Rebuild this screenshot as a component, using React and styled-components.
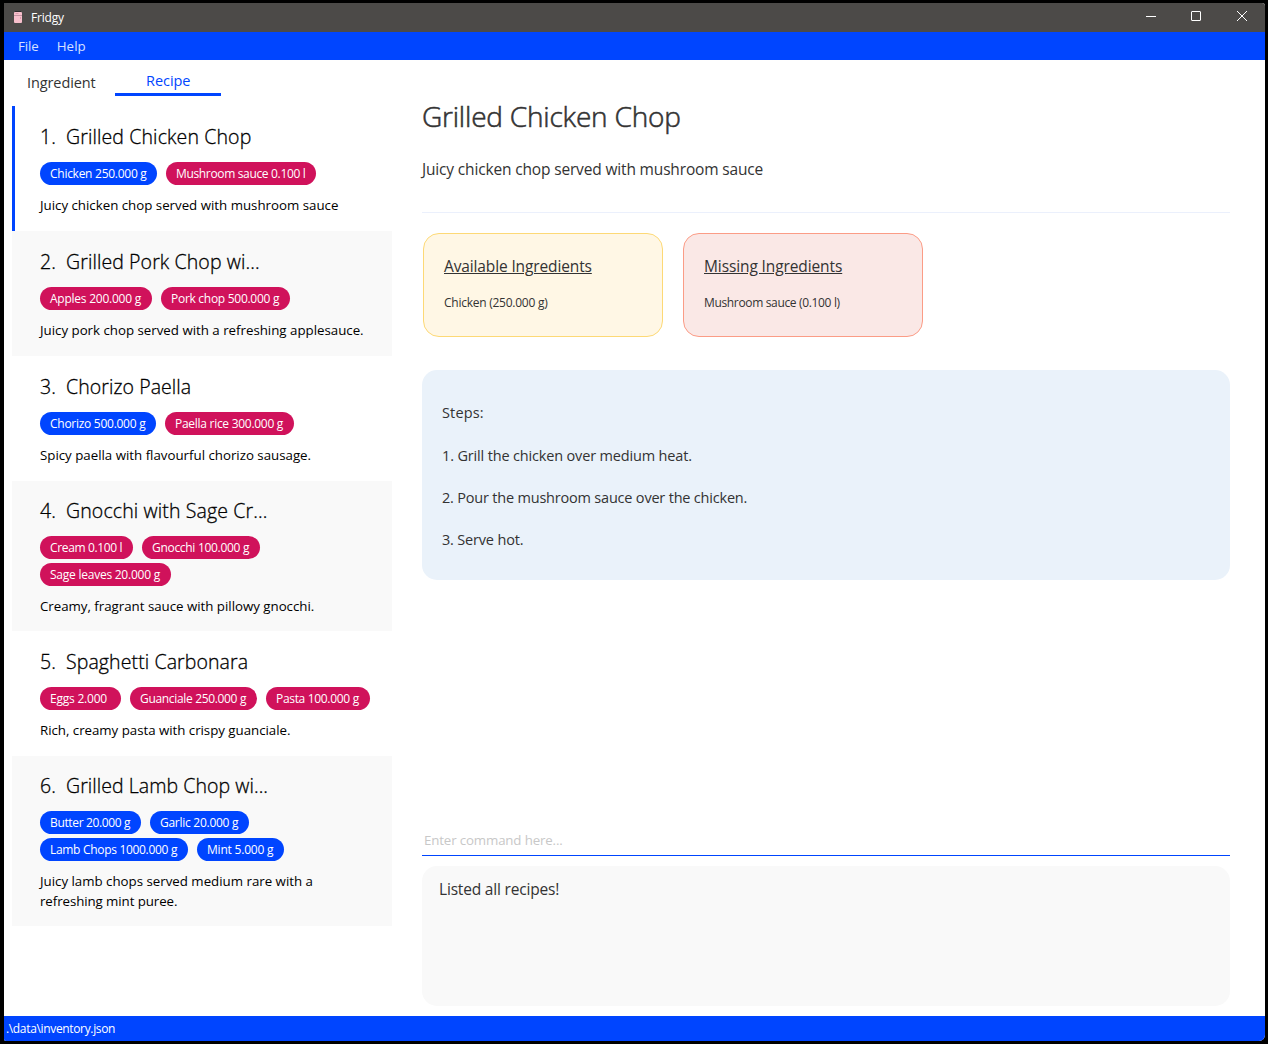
import React from "react";
import styled, { createGlobalStyle } from "styled-components";

const BLUE = "#0045ff";
const PINK = "#d0125b";

const Global = createGlobalStyle`
  * { box-sizing: border-box; }
  body { margin: 0; background: #000; font-family: "Open Sans", "Noto Sans", sans-serif; color: #333; }
`;

const Desktop = styled.div`
  height: 1044px;
  padding: 3px 3px 3px 4px;
  background: #000;
`;
const Window = styled.div`
  display: flex;
  flex-direction: column;
  height: 1038px;
  background: #fff;
  border-radius: 0 3px 6px 2px;
  overflow: hidden;
`;
const TitleBar = styled.header`
  display: flex;
  align-items: center;
  height: 29px;
  flex: none;
  padding-left: 9px;
  background: #4c4a48;
  color: #fff;
`;
const AppIcon = styled.svg`
  width: 10px;
  height: 13px;
  margin-right: 8px;
`;
const WindowControls = styled.div`
  display: flex;
  margin-left: auto;
`;
const ControlIcon = styled.svg`
  width: 46px;
  height: 29px;
`;
const MenuBar = styled.nav`
  display: flex;
  align-items: center;
  gap: 18px;
  height: 28px;
  flex: none;
  padding-left: 14px;
  background: ${BLUE};
  color: #d6e0ff;
`;
const Body = styled.main`
  display: flex;
  flex: 1;
  min-height: 0;
`;
const Sidebar = styled.aside`
  width: 388px;
  padding-left: 8px;
`;
const Tabs = styled.div`
  display: flex;
  height: 46px;
`;
const Tab = styled.div`
  height: ${(p) => (p.$active ? 36 : 46)}px;
  width: ${(p) => (p.$active ? 106 : 103)}px;
  padding: ${(p) => (p.$active ? "11px 0 0 31px" : "13px 0 0 15px")};
  color: ${(p) => (p.$active ? BLUE : "#333")};
  border-bottom: ${(p) => (p.$active ? `3px solid ${BLUE}` : "none")};
`;
const Card = styled.article`
  height: ${(p) => p.$height}px;
  width: 380px;
  padding: ${(p) => p.$top}px 0 0 ${(p) => (p.$selected ? 25 : 28)}px;
  background: ${(p) => (p.$shaded ? "#f9f9f9" : "#fff")};
  border-left: ${(p) => (p.$selected ? `3px solid ${BLUE}` : "none")};
  color: #000;
`;
const CardTitle = styled.div`
  display: flex;
  height: 29px;
`;
const CardNumber = styled.div`
  width: 26px;
`;
const TagFlow = styled.div`
  display: flex;
  flex-wrap: wrap;
  gap: 4px 9px;
  width: 340px;
  margin: 10px 0;
`;
const Tag = styled.div`
  height: 23px;
  width: ${(p) => p.$width}px;
  padding: 4px 0 0 10px;
  border-radius: 12px;
  color: #fff;
  background: ${(p) => (p.$have ? BLUE : PINK)};
`;
const Detail = styled.section`
  display: flex;
  flex-direction: column;
  width: 838px;
  padding: 0 0 0 30px;
`;
const Heading = styled.div`
  height: 42px;
  margin-top: 37px;
`;
const Summary = styled.div`
  height: 22px;
  margin-top: 20px;
`;
const Divider = styled.div`
  height: 1px;
  margin-top: 31px;
  background: #ebf0fc;
`;
const Boxes = styled.div`
  display: flex;
  gap: 20px;
  margin: 20px 0 33px 1px;
`;
const Box = styled.div`
  width: 240px;
  height: 104px;
  padding: 22px 20px;
  border-radius: 16px;
  border: 1px solid ${(p) => (p.$missing ? "#fb9c86" : "#fdd976")};
  background: ${(p) => (p.$missing ? "#fae8e6" : "#fff7e5")};
`;
const BoxTitle = styled.div`
  height: 24px;
  margin-bottom: 15px;
`;
const Steps = styled.div`
  height: 210px;
  padding: 33px 20px;
  border-radius: 15px;
  background: #eaf2fa;
`;
const Step = styled.div`
  height: 42px;
  &:first-child {
    height: 43px;
  }
`;
const CommandInput = styled.div`
  height: 26px;
  margin-top: 250px;
  padding: 1px 2px;
  border-bottom: 1px solid ${BLUE};
`;
const Result = styled.div`
  height: 140px;
  margin-top: 10px;
  padding: 13px 17px;
  border-radius: 15px;
  background: #f9f9f9;
`;
const StatusBar = styled.footer`
  height: 25px;
  flex: none;
  padding: 5px 2px;
  background: ${BLUE};
  color: #fff;
`;
const Text = styled.span`
  display: block;
  width: max-content;
  white-space: pre;
  font-size: ${(p) => p.$size}px;
  line-height: ${(p) => p.$line || Math.round(p.$size * 1.36)}px;
  letter-spacing: ${(p) => p.$track || 0}px;
  font-weight: 400;
  text-decoration: ${(p) => (p.$underline ? "underline" : "none")};
  color: ${(p) => p.$color || "inherit"};
`;
const SemiLight = styled(Text)`
  font-weight: 300;
  -webkit-text-stroke: ${(p) => p.$stroke}px currentColor;
`;

const recipes = [
  {
    name: "Grilled Chicken Chop", height: 125, top: 17, track: 0.12,
    tags: [["Chicken 250.000 g", 117, -0.27, true], ["Mushroom sauce 0.100 l", 150, -0.34]],
    lines: [["Juicy chicken chop served with mushroom sauce", -0.01]],
  },
  {
    name: "Grilled Pork Chop wi...", height: 125, top: 17, track: 0.1,
    tags: [["Apples 200.000 g", 112, -0.24], ["Pork chop 500.000 g", 129, -0.28]],
    lines: [["Juicy pork chop served with a refreshing applesauce.", -0.01]],
  },
  {
    name: "Chorizo Paella", height: 125, top: 17, track: 0.08,
    tags: [["Chorizo 500.000 g", 116, -0.27, true], ["Paella rice 300.000 g", 129, -0.28]],
    lines: [["Spicy paella with flavourful chorizo sausage.", -0.01]],
  },
  {
    name: "Gnocchi with Sage Cr...", height: 150, top: 16, track: 0.12,
    tags: [["Cream 0.100 l", 93, -0.35], ["Gnocchi 100.000 g", 118, -0.3], ["Sage leaves 20.000 g", 131, -0.24]],
    lines: [["Creamy, fragrant sauce with pillowy gnocchi.", -0.02]],
  },
  {
    name: "Spaghetti Carbonara", height: 125, top: 17, track: 0.1,
    tags: [["Eggs 2.000 ", 81, -0.22], ["Guanciale 250.000 g", 127, -0.33], ["Pasta 100.000 g", 104, -0.32]],
    lines: [["Rich, creamy pasta with crispy guanciale.", -0.03]],
  },
  {
    name: "Grilled Lamb Chop wi...", height: 170, top: 16, track: 0.06,
    tags: [["Butter 20.000 g", 101, -0.35, true], ["Garlic 20.000 g", 99, -0.27, true], ["Lamb Chops 1000.000 g", 148, -0.31, true], ["Mint 5.000 g", 87, -0.2, true]],
    lines: [["Juicy lamb chops served medium rare with a", -0.01], ["refreshing mint puree.", -0.08]],
  },
];

const steps = [
  ["Steps:", 0.15],
  ["1. Grill the chicken over medium heat.", -0.16],
  ["2. Pour the mushroom sauce over the chicken.", -0.2],
  ["3. Serve hot.", -0.18],
];

function RecipeCard({ recipe, index }) {
  return (
    <Card $height={recipe.height} $top={recipe.top} $shaded={index % 2 === 1} $selected={index === 0}>
      <CardTitle>
        <CardNumber>
          <SemiLight $size={19.5} $stroke={0.3}>{`${index + 1}.`}</SemiLight>
        </CardNumber>
        <SemiLight $size={19.5} $stroke={0.3} $track={recipe.track}>{recipe.name}</SemiLight>
      </CardTitle>
      <TagFlow>
        {recipe.tags.map(([label, width, track, have]) => (
          <Tag key={label} $width={width} $have={have}>
            <Text $size={12} $track={track}>{label}</Text>
          </Tag>
        ))}
      </TagFlow>
      {recipe.lines.map(([text, track]) => (
        <Text key={text} $size={13.3} $track={track} $line={20}>{text}</Text>
      ))}
    </Card>
  );
}

export default function App() {
  return (
    <Desktop>
      <Global />
      <Window>
        <TitleBar>
          <AppIcon viewBox="0 0 10 13">
            <path d="M2 0.5h6" stroke="#2e2a2c" />
            <rect x="1" y="1" width="8" height="11" rx="1" fill="#f7bfcc" />
            <path d="M1 4.5h8" stroke="#c493a2" />
            <path d="M2.5 2.5h3M7.5 6v2" stroke="#dc9fae" />
          </AppIcon>
          <Text $size={12} $track={-0.2}>Fridgy</Text>
          <WindowControls>
            <ControlIcon viewBox="0 0 46 29"><path d="M19 13.5h10" stroke="#fff" /></ControlIcon>
            <ControlIcon viewBox="0 0 46 29"><rect x="18.5" y="8.5" width="9" height="9" rx="0.5" fill="none" stroke="#fff" /></ControlIcon>
            <ControlIcon viewBox="0 0 46 29"><path d="M18 8l10 10M28 8l-10 10" stroke="#fff" /></ControlIcon>
          </WindowControls>
        </TitleBar>
        <MenuBar>
          <Text $size={13.3} $track={-0.1}>File</Text>
          <Text $size={13.3} $track={0.1}>Help</Text>
        </MenuBar>
        <Body>
          <Sidebar>
            <Tabs>
              <Tab><Text $size={14.5} $track={-0.1}>Ingredient</Text></Tab>
              <Tab $active><Text $size={14.5} $track={-0.05}>Recipe</Text></Tab>
            </Tabs>
            {recipes.map((recipe, i) => (
              <RecipeCard key={recipe.name} recipe={recipe} index={i} />
            ))}
          </Sidebar>
          <Detail>
            <Heading><SemiLight $size={28} $stroke={0.55} $track={-0.2}>Grilled Chicken Chop</SemiLight></Heading>
            <Summary><Text $size={15.5} $track={-0.16}>Juicy chicken chop served with mushroom sauce</Text></Summary>
            <Divider />
            <Boxes>
              <Box>
                <BoxTitle><Text $size={15.5} $track={-0.13} $underline>Available Ingredients</Text></BoxTitle>
                <Text $size={12} $track={-0.25}>Chicken (250.000 g)</Text>
              </Box>
              <Box $missing>
                <BoxTitle><Text $size={15.5} $track={-0.11} $underline>Missing Ingredients</Text></BoxTitle>
                <Text $size={12} $track={-0.34}>Mushroom sauce (0.100 l)</Text>
              </Box>
            </Boxes>
            <Steps>
              {steps.map(([text, track]) => (
                <Step key={text}><Text $size={14.5} $track={track}>{text}</Text></Step>
              ))}
            </Steps>
            <CommandInput><Text $size={13.3} $track={-0.15} $color="#c8c8c8">Enter command here...</Text></CommandInput>
            <Result><Text $size={15.5} $track={-0.18}>Listed all recipes!</Text></Result>
          </Detail>
        </Body>
        <StatusBar><Text $size={12} $track={-0.34}>.\data\inventory.json</Text></StatusBar>
      </Window>
    </Desktop>
  );
}
